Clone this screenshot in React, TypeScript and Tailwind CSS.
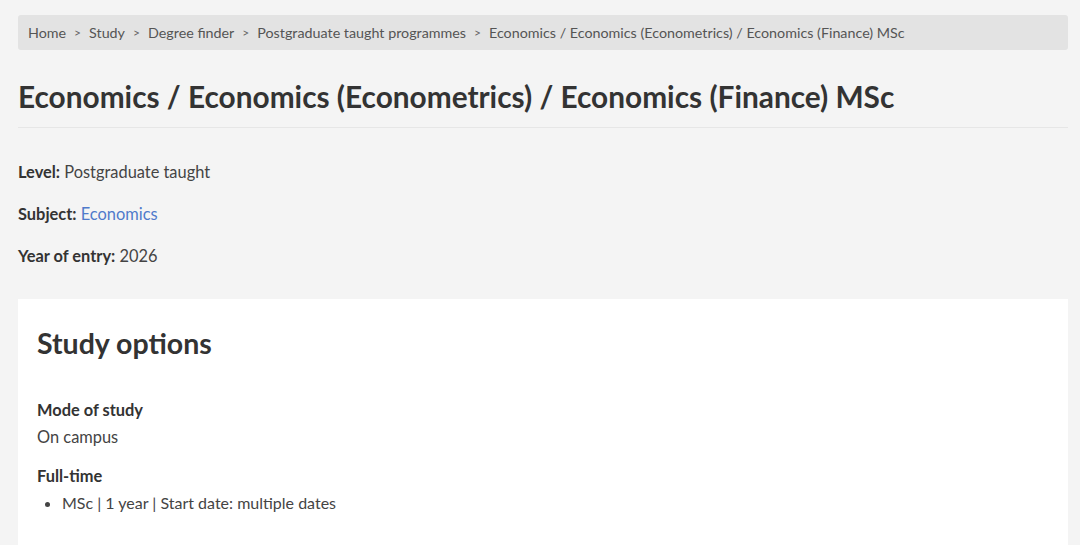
import React from "react";

const crumbs = ["Home", "Study", "Degree finder", "Postgraduate taught programmes"];

export default function App() {
  return (
    <div
      className="min-h-[545px] bg-[#f4f4f4] pl-[18px] pr-[12px] pt-[15px] text-[#333]"
      style={{ fontFamily: "Lato, 'Noto Sans', sans-serif" }}
    >
      <nav className="flex h-[35px] items-center rounded-[3px] bg-[#e3e3e3] px-[10px] text-[14.3px] text-[#555]">
        {crumbs.map((c) => (
          <React.Fragment key={c}>
            <a className="hover:underline">{c}</a>
            <span className="mx-[8px] text-[12px] text-[#666]">&gt;</span>
          </React.Fragment>
        ))}
        <span>Economics / Economics (Econometrics) / Economics (Finance) MSc</span>
      </nav>

      <h1 className="mt-[29px] border-b border-[#e6e6e6] pb-[12px] text-[29.8px] font-bold leading-[36px] text-[#333]">
        Economics / Economics (Econometrics) / Economics (Finance) MSc
      </h1>

      <div className="mt-[33px] flex flex-col gap-[20px] text-[16.4px] leading-[22px] text-[#444]">
        <p>
          <strong className="text-[#333]">Level:</strong> Postgraduate taught
        </p>
        <p>
          <strong className="text-[#333]">Subject:</strong>{" "}
          <a className="text-[#4f7acb]">Economics</a>
        </p>
        <p>
          <strong className="text-[#333]">Year of entry:</strong> 2026
        </p>
      </div>

      <section className="mt-[32px] bg-white px-[19px] pb-[40px] pt-[26px]">
        <h2 className="text-[28.5px] font-bold leading-[36px] text-[#333]">Study options</h2>
        <h3 className="mt-[38px] text-[16.4px] font-bold leading-[22px] text-[#333]">Mode of study</h3>
        <p className="mt-[5px] text-[16.4px] leading-[22px] text-[#444]">On campus</p>
        <h3 className="mt-[17px] text-[16.4px] font-bold leading-[22px] text-[#333]">Full-time</h3>
        <ul className="mt-[5px] list-disc pl-[25px] text-[16px] leading-[22px] text-[#444]">
          <li>MSc | 1 year | Start date: multiple dates</li>
        </ul>
      </section>
    </div>
  );
}
